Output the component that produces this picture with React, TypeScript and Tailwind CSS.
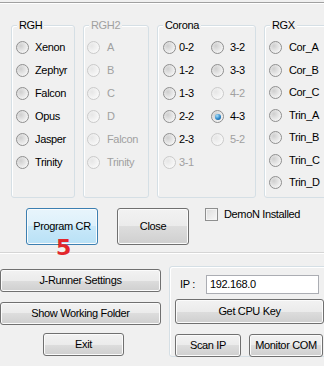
import React from 'react';

type Opt = { label: string; disabled?: boolean; checked?: boolean };

function RadioDot({ disabled, checked }: { disabled?: boolean; checked?: boolean }) {
  if (disabled) {
    return (
      <div className="h-[13px] w-[13px] shrink-0 rounded-full border border-[#cacaca] bg-[radial-gradient(circle_at_35%_35%,#e6e6e6,#f7f7f7_70%)]" />
    );
  }
  return (
    <div className="flex h-[13px] w-[13px] shrink-0 items-center justify-center rounded-full border border-[#8f8f8f] bg-[radial-gradient(circle_at_35%_35%,#cfcfcf,#f4f4f4_75%)]">
      {checked && (
        <div className="h-[6px] w-[6px] rounded-full bg-[radial-gradient(circle_at_35%_30%,#a8e0fb,#2c86c8_55%,#0d4d86)]" />
      )}
    </div>
  );
}

function Radio({ opt, gap }: { opt: Opt; gap: string }) {
  return (
    <div className={`flex h-[23px] items-center ${gap}`}>
      <RadioDot disabled={opt.disabled} checked={opt.checked} />
      <span className={opt.disabled ? 'text-[#a0a0a0]' : 'text-black'}>{opt.label}</span>
    </div>
  );
}

function GroupBox({
  title,
  disabled,
  className,
  children,
}: {
  title?: string;
  disabled?: boolean;
  className: string;
  children?: React.ReactNode;
}) {
  return (
    <div className={`relative shrink-0 rounded-[3px] border border-[#d5dfe5] shadow-[inset_1px_1px_0_#ffffff] ${className}`}>
      {title && (
        <span
          className={`absolute -top-[8px] left-[5px] bg-[#f0f0f0] px-[2px] leading-[14px] ${
            disabled ? 'text-[#a0a0a0]' : 'text-black'
          }`}
        >
          {title}
        </span>
      )}
      {children}
    </div>
  );
}

function WinButton({ label, className, focused }: { label: string; className: string; focused?: boolean }) {
  const look = focused
    ? 'border-[#3c7fb1] bg-[linear-gradient(to_bottom,#e8f5fc_0%,#dcf0fb_50%,#c8e8f9_50%,#b9e1f6_100%)]'
    : 'border-[#707070] bg-[linear-gradient(to_bottom,#f2f2f2_0%,#ebebeb_50%,#dddddd_50%,#cfcfcf_100%)]';
  return (
    <div
      className={`flex shrink-0 items-center justify-center rounded-[3px] border shadow-[inset_0_0_0_1px_#fbfbfb] text-black ${look} ${className}`}
    >
      {label}
    </div>
  );
}

const rgh: Opt[] = [
  { label: 'Xenon' },
  { label: 'Zephyr' },
  { label: 'Falcon' },
  { label: 'Opus' },
  { label: 'Jasper' },
  { label: 'Trinity' },
];

const rgh2: Opt[] = ['A', 'B', 'C', 'D', 'Falcon', 'Trinity'].map((l) => ({ label: l, disabled: true }));

const coronaLeft: Opt[] = [
  { label: '0-2' },
  { label: '1-2' },
  { label: '1-3' },
  { label: '2-2' },
  { label: '2-3' },
  { label: '3-1', disabled: true },
];

const coronaRight: Opt[] = [
  { label: '3-2' },
  { label: '3-3' },
  { label: '4-2', disabled: true },
  { label: '4-3', checked: true },
  { label: '5-2', disabled: true },
];

const rgx: Opt[] = ['Cor_A', 'Cor_B', 'Cor_C', 'Trin_A', 'Trin_B', 'Trin_C', 'Trin_D'].map((l) => ({ label: l }));

export default function App() {
  return (
    <div className="h-[366px] w-[324px] overflow-hidden bg-[#f0f0f0] font-['Liberation_Sans',Arial,sans-serif] text-[11px] leading-[13px] tracking-[-0.35px]">
      {/* window frame edge */}
      <div className="mt-[2px] h-[2px] border-t border-[#a0a0a0] bg-white" />

      {/* group boxes */}
      <div className="mt-[21px] flex gap-[8px] pl-[11px]">
        <GroupBox title="RGH" className="h-[173px] w-[64px] pl-[4px] pt-[10px]">
          {rgh.map((o) => (
            <Radio key={o.label} opt={o} gap="gap-[6px]" />
          ))}
        </GroupBox>

        <GroupBox title="RGH2" disabled className="h-[173px] w-[66px] pl-[3px] pt-[10px]">
          {rgh2.map((o) => (
            <Radio key={o.label} opt={o} gap="gap-[7px]" />
          ))}
        </GroupBox>

        <GroupBox title="Corona" className="flex h-[173px] w-[99px] pl-[5px] pt-[10px]">
          <div className="w-[48px]">
            {coronaLeft.map((o) => (
              <Radio key={o.label} opt={o} gap="gap-[3px]" />
            ))}
          </div>
          <div>
            {coronaRight.map((o) => (
              <Radio key={o.label} opt={o} gap="gap-[6px]" />
            ))}
          </div>
        </GroupBox>

        <GroupBox title="RGX" className="h-[173px] w-[72px] pl-[4px] pt-[10px]">
          <div className="flex flex-col">
            {rgx.map((o) => (
              <div key={o.label} className="h-[22.5px]">
                <Radio opt={o} gap="gap-[7px]" />
              </div>
            ))}
          </div>
        </GroupBox>
      </div>

      {/* action row */}
      <div className="mt-[10px] flex items-start pl-[26px]">
        <div className="relative">
          <WinButton label="Program CR" focused className="h-[37px] w-[72px]" />
          <span className="absolute left-[30px] top-[29px] font-['DejaVu_Sans',sans-serif] text-[22px] font-bold leading-[22px] tracking-normal text-[#e3262b]">
            5
          </span>
        </div>
        <WinButton label="Close" className="ml-[19px] h-[37px] w-[72px]" />
        <div className="ml-[16px] flex items-center gap-[6px]">
          <div className="h-[13px] w-[13px] border border-[#8e8f8f] bg-[linear-gradient(135deg,#dcdcdc,#f8f8f8)] shadow-[inset_0_0_0_1px_#f4f4f4]" />
          <span>DemoN Installed</span>
        </div>
      </div>

      {/* separator */}
      <div className="mt-[7px] border-t border-b border-t-[#d5d5d5] border-b-white" />

      {/* lower section */}
      <div className="flex">
        <div className="flex w-[161px] shrink-0 flex-col">
          <WinButton label="J-Runner Settings" className="mt-[15px] h-[23px] w-[161px]" />
          <WinButton label="Show Working Folder" className="mt-[10px] h-[23px] w-[161px]" />
          <WinButton label="Exit" className="ml-[43px] mt-[8px] h-[23px] w-[81px]" />
        </div>

        <GroupBox className="ml-[8px] mt-[12px] h-[91px] w-[160px] pl-[5px] pt-[8px]">
          <div className="flex items-center">
            <span className="ml-[5px] w-[26px]">IP :</span>
            <div className="flex h-[19px] w-[113px] items-center border border-[#abadb3] bg-white pl-[3px]">
              192.168.0
            </div>
          </div>
          <WinButton label="Get CPU Key" className="mt-[5px] h-[25px] w-[149px]" />
          <div className="mt-[10px] flex">
            <WinButton label="Scan IP" className="h-[23px] w-[66px]" />
            <WinButton label="Monitor COM" className="ml-[8px] h-[23px] w-[74px]" />
          </div>
        </GroupBox>
      </div>
    </div>
  );
}
